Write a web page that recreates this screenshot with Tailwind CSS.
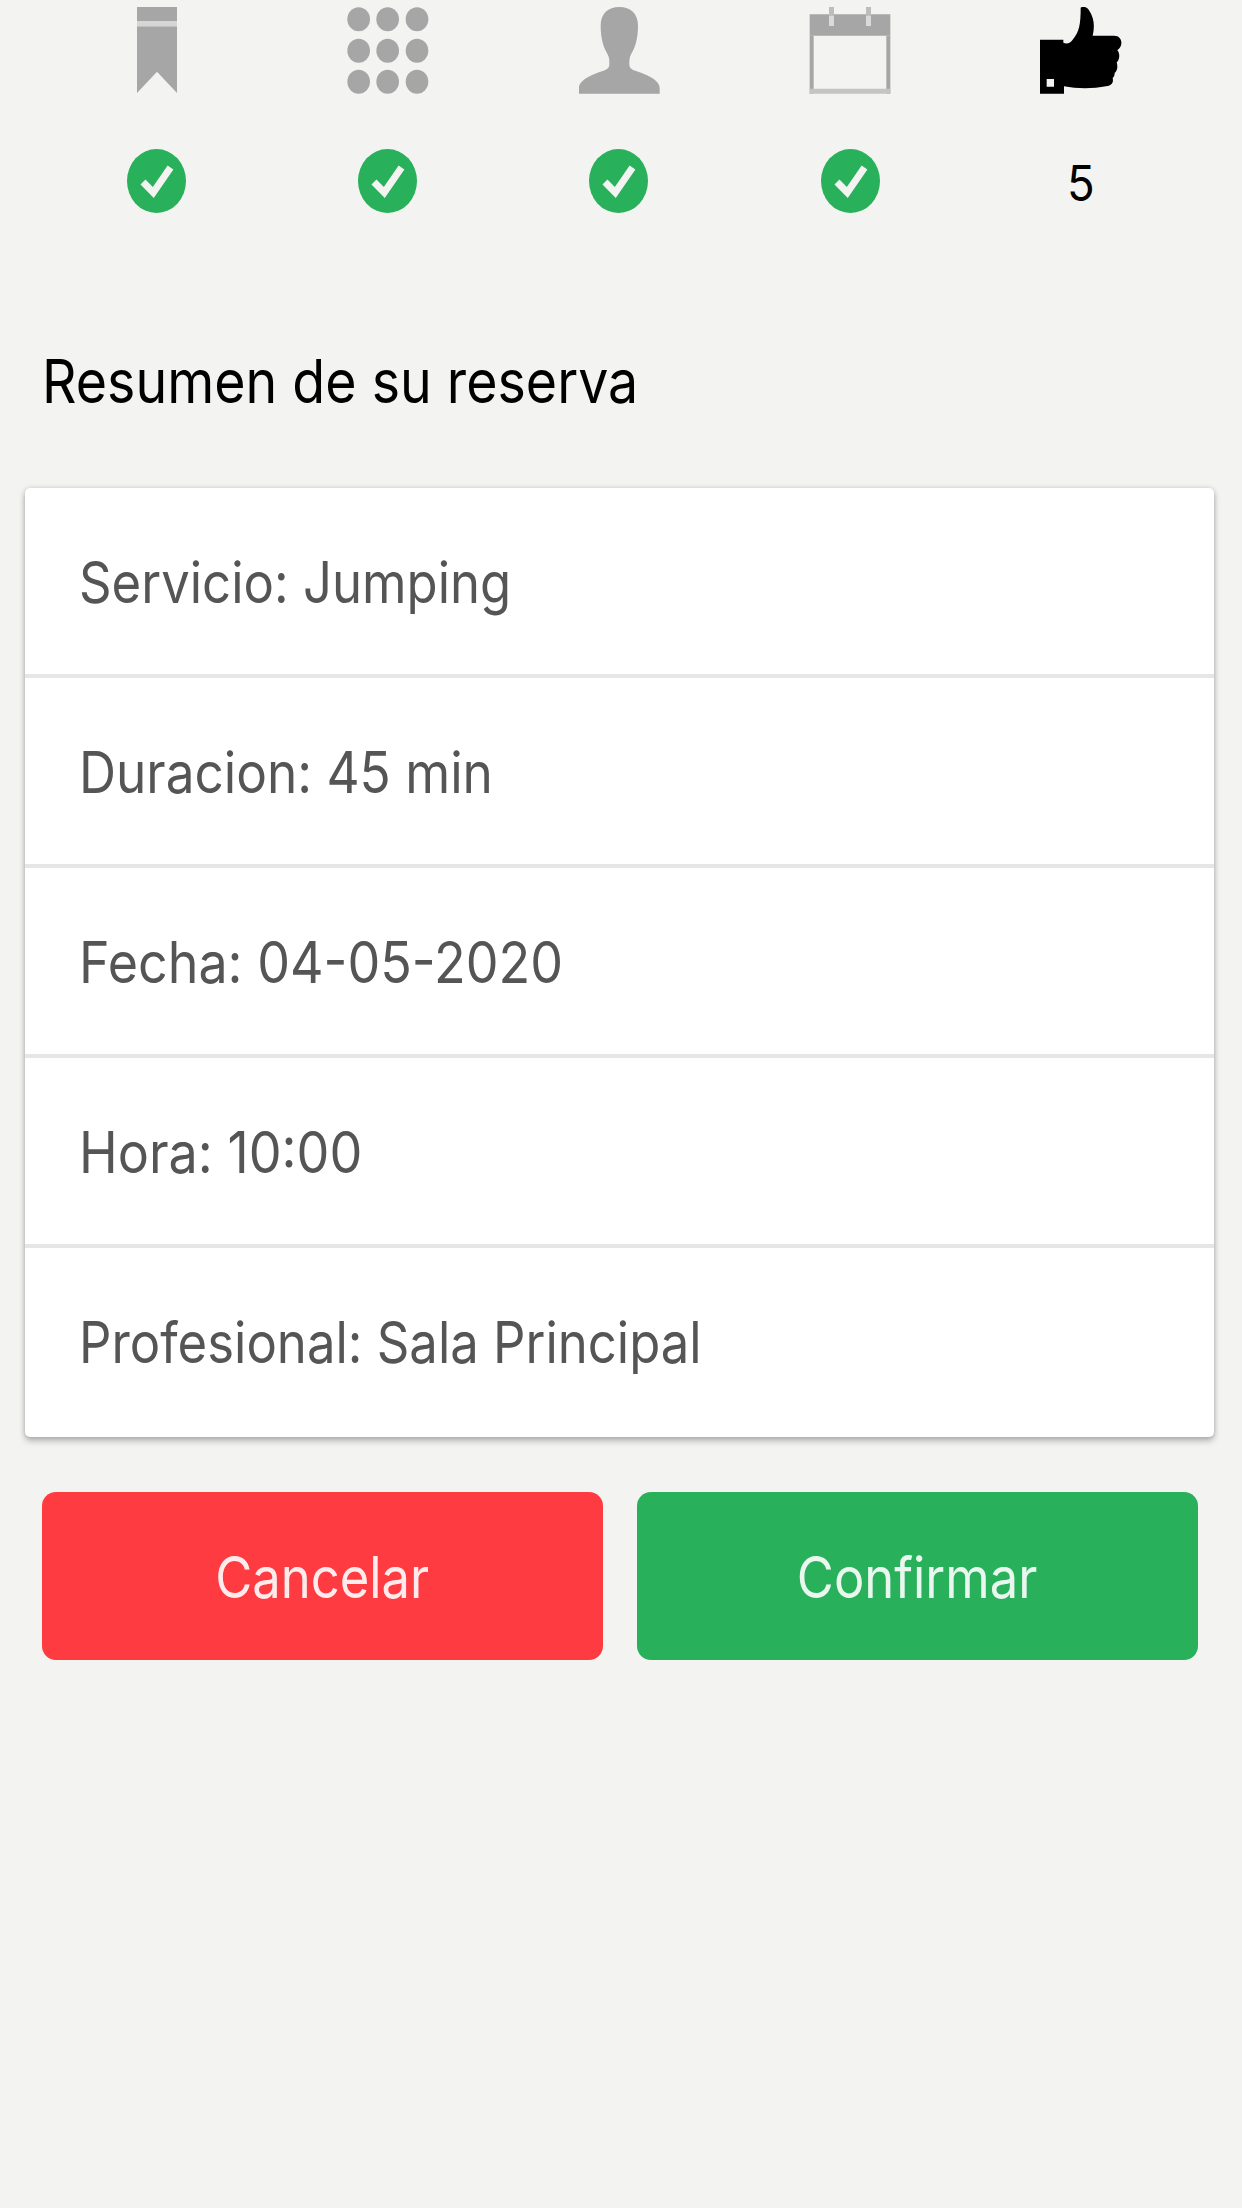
<!DOCTYPE html>
<html lang="es">
<head>
  <meta charset="UTF-8"/>
  <meta name="viewport" content="width=device-width, initial-scale=1.0"/>
  <title>Reserva</title>
  <script src="https://cdn.jsdelivr.net/npm/@tailwindcss/browser@4"></script>
</head>
<body class="bg-[#f3f3f1] text-black min-h-screen font-['Inter',sans-serif]">

  <!-- Shared check mark -->
  <svg class="hidden">
    <symbol id="check" viewBox="0 0 59 64" preserveAspectRatio="none">
      <ellipse cx="29.5" cy="32" rx="29.5" ry="32" fill="#28b05b"/>
      <path d="M16 33L26.3 43.5L43.5 18.5" fill="none" stroke="#f3f3f1" stroke-width="7"/>
    </symbol>
  </svg>

  <!-- Steps -->
  <header class="grid grid-cols-5 pl-[41px] pr-[45px] pt-[7px] text-[#a6a6a6]">
    <div class="flex flex-col items-center gap-[55px]">
      <svg class="w-[82px] h-[87px]" viewBox="0 0 246 261" fill="currentColor">
        <path d="M63 0h120v42H63zM63 58h120v200l-60-64l-60 64z"/>
        <path d="M63 42h120v16H63z" fill="#d6d6d5"/>
      </svg>
      <svg class="w-[59px] h-[64px]"><use href="#check"/></svg>
    </div>
    <div class="flex flex-col items-center gap-[55px]">
      <svg class="w-[82px] h-[87px]" viewBox="0 0 246 261" fill="currentColor">
        <ellipse cx="35" cy="37" rx="34" ry="36"/>
        <ellipse cx="122" cy="37" rx="34" ry="36"/>
        <ellipse cx="210" cy="37" rx="34" ry="36"/>
        <ellipse cx="35" cy="131" rx="34" ry="36"/>
        <ellipse cx="122" cy="131" rx="34" ry="36"/>
        <ellipse cx="210" cy="131" rx="34" ry="36"/>
        <ellipse cx="35" cy="224" rx="34" ry="36"/>
        <ellipse cx="122" cy="224" rx="34" ry="36"/>
        <ellipse cx="210" cy="224" rx="34" ry="36"/>
      </svg>
      <svg class="w-[59px] h-[64px]"><use href="#check"/></svg>
    </div>
    <div class="flex flex-col items-center gap-[55px]">
      <svg class="w-[82px] h-[87px]" viewBox="0 0 246 261" fill="currentColor">
        <path d="M124 0C158 0 180 20 180 56C180 98 170 124 160 140C154 150 154 160 154 170C154 182 158 186 172 191C206 203 245 218 245 243V260H3V243C3 218 42 203 76 191C90 186 94 182 94 170C94 160 94 150 88 140C78 124 68 98 68 56C68 20 90 0 124 0Z"/>
      </svg>
      <svg class="w-[59px] h-[64px]"><use href="#check"/></svg>
    </div>
    <div class="flex flex-col items-center gap-[55px]">
      <svg class="w-[82px] h-[87px]" viewBox="0 0 246 261" fill="currentColor">
        <path d="M2 22H244V86H2z"/>
        <path d="M2 86h12v174H2zM232 86h12v174h-12z"/>
        <path d="M2 245h242v15H2z" fill="#c4c4c3"/>
        <path d="M60 0h15v26H60zM171 0h15v26h-15z" fill="#bdbdbc"/>
        <path d="M60 26h15v31H60zM171 26h15v31h-15z" fill="#dadad9"/>
      </svg>
      <svg class="w-[59px] h-[64px]"><use href="#check"/></svg>
    </div>
    <div class="flex flex-col items-center gap-[55px] text-black">
      <svg class="w-[82px] h-[87px]" viewBox="0 0 246 261" fill="currentColor">
        <path fill-rule="evenodd" d="M0 98H70V107C80 112 92 108 98 98C118 75 122 50 122 2C128 -3 140 -1 146 8C164 34 164 60 158 86H222C242 86 248 104 242 118C240 124 234 128 232 130C240 138 240 158 230 166C234 178 232 192 224 198C224 205 222 210 218 213C222 230 212 236 198 238C160 246 110 246 72 238V260H0ZM20 216V239H42V216Z"/>
      </svg>
      <span class="h-[64px] leading-[70px] text-[49px] scale-x-[0.93]">5</span>
    </div>
  </header>

  <h1 class="mt-[132px] ml-[42px] h-[72px] leading-[72px] text-[60px] whitespace-nowrap origin-left scale-x-[0.895]">Resumen de su reserva</h1>

  <!-- Booking summary -->
  <ul class="mt-[71px] ml-[25px] mr-[28px] bg-white rounded-[5px] overflow-hidden text-[57px] text-[#555] shadow-[0_4px_6px_rgba(0,0,0,0.25),0_0_5px_rgba(0,0,0,0.15)] divide-y-4 divide-[#e6e6e6]">
    <li class="h-[190px] pl-[54px] pt-[3px] flex items-center"><span class="origin-left scale-x-[0.892]">Servicio: Jumping</span></li>
    <li class="h-[190px] pl-[54px] pt-[3px] flex items-center"><span class="origin-left scale-x-[0.9]">Duracion: 45 min</span></li>
    <li class="h-[190px] pl-[54px] pt-[3px] flex items-center"><span class="origin-left scale-x-[0.912]">Fecha: 04-05-2020</span></li>
    <li class="h-[190px] pl-[54px] pt-[3px] flex items-center"><span class="origin-left scale-x-[0.914]">Hora: 10:00</span></li>
    <li class="h-[189px] pl-[54px] flex items-center"><span class="origin-left scale-x-[0.892]">Profesional: Sala Principal</span></li>
  </ul>

  <!-- Actions -->
  <div class="mt-[55px] ml-[42px] mr-[44px] flex gap-[34px] text-[57px] text-white/90">
    <button class="flex-1 h-[168px] pt-[3px] rounded-[14px] bg-[#ff3b42]"><span class="inline-block scale-x-[0.89]">Cancelar</span></button>
    <button class="flex-1 h-[168px] pt-[3px] rounded-[14px] bg-[#28b05b]"><span class="inline-block scale-x-[0.89]">Confirmar</span></button>
  </div>

</body>
</html>
